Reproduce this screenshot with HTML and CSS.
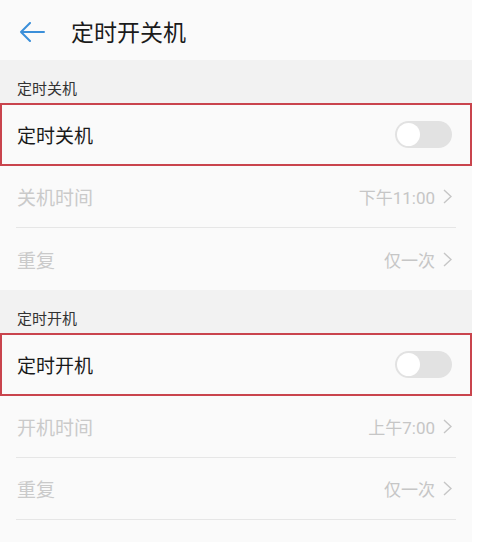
FILE: index.html
```html
<!DOCTYPE html>
<html>
<head>
  <title>定时开关机</title>
  <meta name="viewport" content="width=device-width, initial-scale=1.0">
  <link rel="stylesheet" href="styles.css">
</head>
<body>
  <div class="screen">
    <div class="header">
      <svg class="back" width="26" height="20" viewBox="0 0 26 20">
        <path d="M25 10H2M11 1L2 10l9 9" fill="none" stroke="#3b8fd9" stroke-width="2" stroke-linecap="round" stroke-linejoin="round"/>
      </svg>
      <h1>定时开关机</h1>
    </div>

    <div class="section-title">定时关机</div>
    <div class="switch-row">
      <span class="label">定时关机</span>
      <span class="toggle"><span class="knob"></span></span>
    </div>
    <div class="item">
      <div class="item-body sep">
        <span class="label muted">关机时间</span>
        <span class="value">下午11:00<svg class="chev" width="9" height="15" viewBox="0 0 9 15"><path d="M1 1l7 6.5L1 14" fill="none" stroke="#c6c6c6" stroke-width="1.4"/></svg></span>
      </div>
    </div>
    <div class="item">
      <div class="item-body">
        <span class="label muted">重复</span>
        <span class="value">仅一次<svg class="chev" width="9" height="15" viewBox="0 0 9 15"><path d="M1 1l7 6.5L1 14" fill="none" stroke="#c6c6c6" stroke-width="1.4"/></svg></span>
      </div>
    </div>

    <div class="section-title">定时开机</div>
    <div class="switch-row">
      <span class="label">定时开机</span>
      <span class="toggle"><span class="knob"></span></span>
    </div>
    <div class="item">
      <div class="item-body sep">
        <span class="label muted">开机时间</span>
        <span class="value">上午7:00<svg class="chev" width="9" height="15" viewBox="0 0 9 15"><path d="M1 1l7 6.5L1 14" fill="none" stroke="#c6c6c6" stroke-width="1.4"/></svg></span>
      </div>
    </div>
    <div class="item">
      <div class="item-body sep">
        <span class="label muted">重复</span>
        <span class="value">仅一次<svg class="chev" width="9" height="15" viewBox="0 0 9 15"><path d="M1 1l7 6.5L1 14" fill="none" stroke="#c6c6c6" stroke-width="1.4"/></svg></span>
      </div>
    </div>
    <div class="bottom"></div>
  </div>
</body>
</html>
```

FILE: styles.css
```css
* {
  margin: 0;
  padding: 0;
  box-sizing: border-box;
}

body {
  font-family: "Noto Sans CJK SC", "Noto Sans", sans-serif;
  background: #fff;
  color: #1a1a1a;
}

.screen {
  width: 472px;
  background: #fafafa;
}

.header {
  height: 60px;
  display: flex;
  align-items: center;
  padding-left: 19px;
  background: #fafafa;
}

.back {
  display: block;
  margin-top: 4px;
}

.header h1 {
  font-size: 23px;
  font-weight: 400;
  margin-left: 26px;
  color: #1b1b1b;
  line-height: 1;
  margin-top: 2px;
}

.section-title {
  height: 43px;
  padding: 18px 0 0 17px;
  font-size: 15px;
  line-height: 20px;
  color: #333;
  background: #f2f2f2;
}

.switch-row {
  height: 63px;
  border: 2px solid #c9444d;
  display: flex;
  align-items: center;
  justify-content: space-between;
  padding: 0 18px 0 15px;
  background: #fafafa;
}

.label {
  font-size: 19px;
  line-height: 1;
}

.muted {
  color: #cacaca;
}

.toggle {
  width: 57px;
  height: 27px;
  border-radius: 14px;
  background: #e2e2e2;
  display: flex;
  align-items: center;
  padding-left: 2px;
}

.knob {
  width: 23px;
  height: 23px;
  border-radius: 50%;
  background: #fff;
}

.item {
  padding: 0 16px;
}

.item-body {
  height: 62px;
  display: flex;
  align-items: center;
  justify-content: space-between;
  padding: 0 4px 0 1px;
}

.sep {
  border-bottom: 1px solid #e6e6e6;
}

.value {
  font-family: Roboto, "Noto Sans CJK SC", sans-serif;
  font-size: 17px;
  color: #c6c6c6;
  display: flex;
  align-items: center;
}

.chev {
  display: block;
  margin-left: 8px;
}

.bottom {
  height: 22px;
}
```
